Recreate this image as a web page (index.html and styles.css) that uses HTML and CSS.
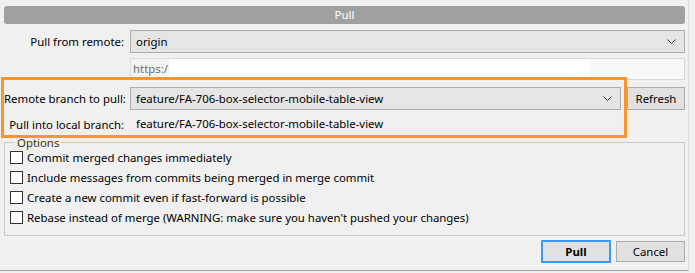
FILE: index.html
```html
<!DOCTYPE html>
<html lang="en">
<head>
    <meta charset="UTF-8">
    <meta name="viewport" content="width=device-width, initial-scale=1.0">
    <title>Pull</title>
    <link rel="stylesheet" href="styles.css">
</head>
<body>

<div class="dialog">

    <div class="title">Pull</div>

    <div class="form">
        <label class="label">Pull from remote:</label>
        <div class="select wide">
            <span>origin</span>
            <svg class="arrow" width="9" height="5" viewBox="0 0 9 5"><path d="M0.5 0.5 L4.5 4.5 L8.5 0.5" fill="none" stroke="#333" stroke-width="1"/></svg>
        </div>

        <div></div>
        <div class="url wide">
            <span class="url-text">https:/</span>
            <span class="url-mask"></span>
        </div>

        <label class="label">Remote branch to pull:</label>
        <div class="select">
            <span>feature/FA-706-box-selector-mobile-table-view</span>
            <svg class="arrow" width="9" height="5" viewBox="0 0 9 5"><path d="M0.5 0.5 L4.5 4.5 L8.5 0.5" fill="none" stroke="#333" stroke-width="1"/></svg>
        </div>
        <button class="btn refresh">Refresh</button>

        <label class="label">Pull into local branch:</label>
        <div class="value wide">feature/FA-706-box-selector-mobile-table-view</div>
    </div>

    <fieldset class="options">
        <legend>Options</legend>
        <label class="check"><span class="box"></span>Commit merged changes immediately</label>
        <label class="check"><span class="box"></span>Include messages from commits being merged in merge commit</label>
        <label class="check"><span class="box"></span>Create a new commit even if fast-forward is possible</label>
        <label class="check"><span class="box"></span>Rebase instead of merge (WARNING: make sure you haven't pushed your changes)</label>
    </fieldset>

    <div class="actions">
        <button class="btn primary">Pull</button>
        <button class="btn cancel">Cancel</button>
    </div>

    <div class="highlight"></div>
</div>

</body>
</html>
```

FILE: styles.css
```css
html {
    background: #f0f0f0;
}
body {
    margin: 0;
    font-family: "Noto Sans", "Open Sans", sans-serif;
    font-size: 11.4px;
    color: #000;
}
.dialog {
    position: relative;
    width: 689px;
    height: 271px;
    padding: 6px 0 0 4px;
    box-sizing: border-box;
    border-right: 1px solid #dadada;
    border-bottom: 1px solid #a0a0a0;
    box-shadow: 0 1px 0 #444;
    display: flex;
    flex-direction: column;
}
.title {
    width: 681px;
    height: 18px;
    line-height: 18px;
    background: #a0a0a0;
    border-radius: 3px;
    color: #fff;
    text-align: center;
}
.form {
    display: grid;
    grid-template-columns: 120px 1fr 58px;
    column-gap: 6px;
    row-gap: 5px;
    width: 681px;
    margin-top: 6px;
}
.label {
    text-align: right;
    align-self: center;
    white-space: nowrap;
}
.wide {
    grid-column: 2 / 4;
}
.select {
    height: 23px;
    box-sizing: border-box;
    border: 1px solid #adadad;
    background: #e5e5e5;
    display: flex;
    align-items: center;
    justify-content: space-between;
    padding: 0 8px 0 5px;
}
.url {
    height: 22px;
    box-sizing: border-box;
    border: 1px solid #d9d9d9;
    background: #f7f7f7;
    display: flex;
    align-items: stretch;
    margin-bottom: 2px;
}
.url-text {
    color: #6d6d6d;
    padding: 0 1px 0 2px;
    line-height: 20px;
    background: #f3f3f3;
}
.url-mask {
    width: 421px;
    background: #fff;
}
.value {
    height: 18px;
    line-height: 18px;
    padding-left: 6px;
}
.btn {
    font-family: inherit;
    font-size: 11.4px;
    color: #000;
    background: #e1e1e1;
    border: 1px solid #adadad;
    padding: 0;
    box-sizing: border-box;
}
.refresh {
    height: 23px;
}
.options {
    margin: 2px 0 0 0;
    width: 681px;
    box-sizing: border-box;
    border: 1px solid #c8c8c8;
    padding: 0 5px 8px 5px;
    display: flex;
    flex-direction: column;
}
.options legend {
    padding: 0 2px;
    margin-left: 5px;
    color: #333;
}
.check {
    height: 20px;
    display: flex;
    align-items: center;
    gap: 4px;
    white-space: nowrap;
}
.check:first-of-type {
    margin-top: -3px;
}
.box {
    width: 13px;
    height: 13px;
    box-sizing: border-box;
    border: 1px solid #333;
    background: #fff;
}
.actions {
    display: flex;
    justify-content: flex-end;
    align-items: center;
    gap: 5px;
    width: 681px;
    margin-top: 4px;
}
.primary {
    width: 70px;
    height: 23px;
    border: 2px solid #3c9bf0;
    font-weight: bold;
}
.cancel {
    width: 69px;
    height: 21px;
}
.highlight {
    position: absolute;
    left: 1px;
    top: 77px;
    width: 626px;
    height: 61px;
    box-sizing: border-box;
    border: 3px solid #f7952e;
    pointer-events: none;
}
```
